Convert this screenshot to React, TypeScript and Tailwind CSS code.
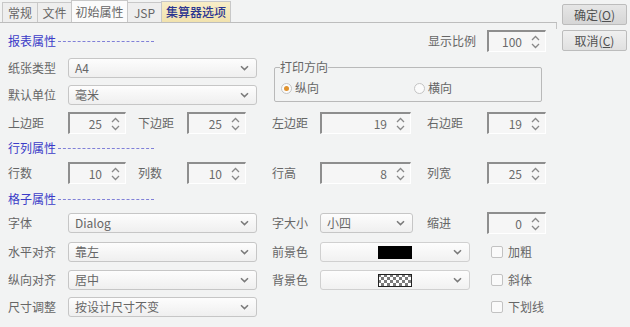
import React from "react";

const Chevron = () => (
  <svg width="9" height="6" viewBox="0 0 9 6" className="shrink-0">
    <path d="M1 1.2 L4.5 4.6 L8 1.2" fill="none" stroke="#7a7a7a" strokeWidth="1.5" />
  </svg>
);

const SpinArrows = () => (
  <svg width="9" height="14" viewBox="0 0 9 14" className="shrink-0">
    <path d="M1 5 L4.5 1.5 L8 5" fill="none" stroke="#888" strokeWidth="1.3" />
    <path d="M1 9 L4.5 12.5 L8 9" fill="none" stroke="#888" strokeWidth="1.3" />
  </svg>
);

function Spinner({ value, w }: { value: string; w: string }) {
  return (
    <div
      className={`${w} h-[22px] shrink-0 flex items-center justify-end border-t-2 border-l-2 border-t-[#8e8e8e] border-l-[#8e8e8e] border-r border-b border-r-white border-b-white bg-[#f6f6f6] pr-[5px]`}
    >
      <span className="text-[12px] text-[#6a6a6a] leading-none mr-[9px]">{value}</span>
      <SpinArrows />
    </div>
  );
}

function Combo({ text, w }: { text: string; w: string }) {
  return (
    <div
      className={`${w} h-[20px] shrink-0 flex items-center justify-between border border-[#c6c6c6] rounded-[3px] bg-linear-to-b from-[#fdfdfd] to-[#efefef] pl-[6px] pr-[7px]`}
    >
      <span className="text-[12px] text-[#666] leading-none">{text}</span>
      <Chevron />
    </div>
  );
}

function ColorCombo({ checker }: { checker?: boolean }) {
  return (
    <div className="w-[150px] h-[20px] shrink-0 flex items-center border border-[#d0d0d0] rounded-[3px] bg-linear-to-b from-[#fdfdfd] to-[#f1f1f1] pr-[7px]">
      <div className="flex-1 flex justify-center pl-[16px]">
        {checker ? (
          <svg width="34" height="13" viewBox="0 0 34 13">
            <defs>
              <pattern id="chk" width="6" height="6" patternUnits="userSpaceOnUse">
                <rect width="6" height="6" fill="#ffffff" />
                <rect width="3" height="3" fill="#7a7a7a" />
                <rect x="3" y="3" width="3" height="3" fill="#7a7a7a" />
              </pattern>
            </defs>
            <rect x="0.5" y="0.5" width="33" height="12" fill="url(#chk)" stroke="#222" />
          </svg>
        ) : (
          <div className="w-[34px] h-[13px] bg-black" />
        )}
      </div>
      <Chevron />
    </div>
  );
}

function Label({ text, w }: { text: string; w: string }) {
  return <div className={`${w} shrink-0 text-[12px] text-[#666] leading-none`}>{text}</div>;
}

function Section({ text }: { text: string }) {
  return (
    <div className="flex items-center h-[14px]">
      <span className="text-[12px] text-[#3b3bc8] leading-none">{text}</span>
      <div className="w-[96px] h-0 border-t border-dashed border-[#8080d8] ml-[2px]" />
    </div>
  );
}

function Check({ text }: { text: string }) {
  return (
    <div className="flex items-center shrink-0">
      <div className="w-[12px] h-[12px] border border-[#c2c2c2] rounded-[2px] bg-[#fafafa]" />
      <span className="ml-[5px] text-[12px] text-[#666] leading-none">{text}</span>
    </div>
  );
}

function Radio({ text, on }: { text: string; on?: boolean }) {
  return (
    <div className="flex items-center">
      <div className="w-[11px] h-[11px] rounded-full border border-[#c4c4c4] bg-[#fbfbfb] flex items-center justify-center">
        {on && <div className="w-[5px] h-[5px] rounded-full bg-[#e0922e]" />}
      </div>
      <span className="ml-[3px] text-[12px] text-[#666] leading-none">{text}</span>
    </div>
  );
}

function Tab({ text, w, active, hover }: { text: string; w: string; active?: boolean; hover?: boolean }) {
  return (
    <div
      className={`${w} ${hover ? "h-[22px] bg-[#fbfbfb]" : active ? "h-[21px] bg-linear-to-b from-[#f8eec8] to-[#f1e2ad]" : "h-[20px] bg-[#eeeeee]"} shrink-0 flex items-center justify-center border border-b-0 border-[#c8c8c8] -ml-px first:ml-0`}
    >
      <span className={`text-[12px] leading-none ${active ? "text-[#2b3590] font-medium" : "text-[#666]"}`}>{text}</span>
    </div>
  );
}

function Button({ text, u, dark }: { text: string; u: string; dark?: boolean }) {
  return (
    <div
      className={`w-[65px] h-[21px] flex items-center justify-center border border-[#bcbcbc] rounded-[2px] ${dark ? "bg-linear-to-b from-[#e6e6e6] to-[#d6d6d6]" : "bg-linear-to-b from-[#f0f0f0] to-[#e0e0e0]"}`}
    >
      <span className="text-[12px] text-[#505050] leading-none">
        {text}(<span className="underline">{u}</span>)
      </span>
    </div>
  );
}

export default function App() {
  return (
    <div className="w-[630px] h-[327px] bg-[#f2f3f3] flex font-['Noto_Sans_CJK_SC',sans-serif] overflow-hidden">
      <div className="w-[557px] flex flex-col">
        {/* tabs */}
        <div className="h-[23px] flex items-end pl-[2px] border-b border-[#bdbdbd]">
          <Tab text="常规" w="w-[36px]" />
          <Tab text="文件" w="w-[35px]" />
          <Tab text="初始属性" w="w-[57px]" hover />
          <Tab text="JSP" w="w-[35px]" />
          <Tab text="集算器选项" w="w-[70px]" active />
        </div>
        <div className="flex-1 flex flex-col pl-[8px]">
          <div className="self-end w-px h-[6px] bg-[#c4c4c4] -mb-[6px]" />
          {/* row 1 */}
          <div className="mt-[7px] h-[22px] flex items-center">
            <div className="w-[420px] shrink-0">
              <Section text="报表属性" />
            </div>
            <Label text="显示比例" w="w-[59px]" />
            <Spinner value="100" w="w-[59px]" />
          </div>
          {/* paper block */}
          <div className="mt-[6px] flex">
            <div className="flex flex-col gap-[7px]">
              <div className="h-[20px] flex items-center">
                <Label text="纸张类型" w="w-[60px]" />
                <Combo text="A4" w="w-[189px]" />
              </div>
              <div className="h-[20px] flex items-center">
                <Label text="默认单位" w="w-[60px]" />
                <Combo text="毫米" w="w-[189px]" />
              </div>
            </div>
            <fieldset className="ml-[17px] mt-[2px] w-[268px] h-[42px] border border-[#b9b9b9] rounded-[2px] px-[6px]">
              <legend className="text-[12px] text-[#666] leading-[14px] px-0 -ml-[1px]">打印方向</legend>
              <div className="flex items-center mt-[8px]">
                <div className="w-[133px]">
                  <Radio text="纵向" on />
                </div>
                <Radio text="横向" />
              </div>
            </fieldset>
          </div>
          {/* margins */}
          <div className="mt-[7px] h-[22px] flex items-center">
            <Label text="上边距" w="w-[60px]" />
            <Spinner value="25" w="w-[58px]" />
            <div className="w-[12px]" />
            <Label text="下边距" w="w-[49px]" />
            <Spinner value="25" w="w-[59px]" />
            <div className="w-[26px]" />
            <Label text="左边距" w="w-[48px]" />
            <Spinner value="19" w="w-[91px]" />
            <div className="w-[16px]" />
            <Label text="右边距" w="w-[60px]" />
            <Spinner value="19" w="w-[59px]" />
          </div>
          <div className="mt-[7px]">
            <Section text="行列属性" />
          </div>
          <div className="mt-[7px] h-[22px] flex items-center">
            <Label text="行数" w="w-[60px]" />
            <Spinner value="10" w="w-[58px]" />
            <div className="w-[12px]" />
            <Label text="列数" w="w-[49px]" />
            <Spinner value="10" w="w-[59px]" />
            <div className="w-[26px]" />
            <Label text="行高" w="w-[48px]" />
            <Spinner value="8" w="w-[91px]" />
            <div className="w-[16px]" />
            <Label text="列宽" w="w-[60px]" />
            <Spinner value="25" w="w-[59px]" />
          </div>
          <div className="mt-[8px]">
            <Section text="格子属性" />
          </div>
          <div className="mt-[6px] h-[22px] flex items-center">
            <Label text="字体" w="w-[60px]" />
            <Combo text="Dialog" w="w-[189px]" />
            <div className="w-[15px]" />
            <Label text="字大小" w="w-[48px]" />
            <Combo text="小四" w="w-[93px]" />
            <div className="w-[14px]" />
            <Label text="缩进" w="w-[60px]" />
            <Spinner value="0" w="w-[59px]" />
          </div>
          <div className="mt-[8px] h-[20px] flex items-center">
            <Label text="水平对齐" w="w-[60px]" />
            <Combo text="靠左" w="w-[189px]" />
            <div className="w-[15px]" />
            <Label text="前景色" w="w-[48px]" />
            <ColorCombo />
            <div className="w-[21px]" />
            <Check text="加粗" />
          </div>
          <div className="mt-[8px] h-[20px] flex items-center">
            <Label text="纵向对齐" w="w-[60px]" />
            <Combo text="居中" w="w-[189px]" />
            <div className="w-[15px]" />
            <Label text="背景色" w="w-[48px]" />
            <ColorCombo checker />
            <div className="w-[21px]" />
            <Check text="斜体" />
          </div>
          <div className="mt-[7px] h-[20px] flex items-center">
            <Label text="尺寸调整" w="w-[60px]" />
            <Combo text="按设计尺寸不变" w="w-[189px]" />
            <div className="w-[234px]" />
            <Check text="下划线" />
          </div>
        </div>
      </div>
      <div className="flex flex-col pl-[5px] pt-[4px] gap-[5px]">
        <Button text="确定" u="O" dark />
        <Button text="取消" u="C" />
      </div>
    </div>
  );
}
